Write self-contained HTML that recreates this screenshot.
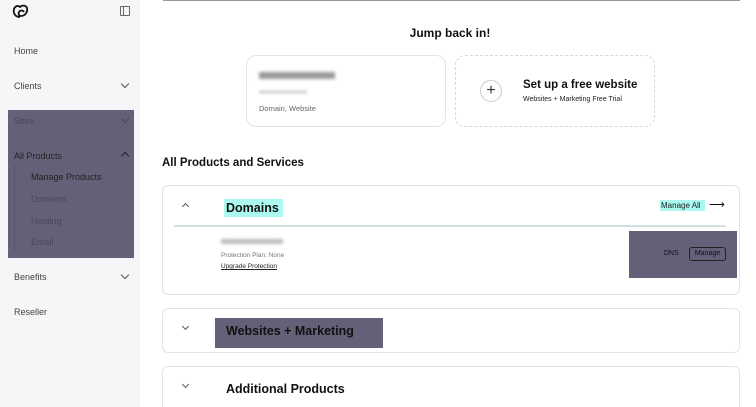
<!DOCTYPE html>
<html style="width:756px;height:407px;overflow:hidden"><head><style>
*{margin:0;padding:0;box-sizing:border-box}
body{width:756px;height:407px;overflow:hidden;background:#fff;font-family:"Liberation Sans",sans-serif;position:relative;color:#111}
.a{position:absolute}
.side{left:0;top:0;width:140px;height:407px;background:#f5f6f8}
.nav{font-size:9px;color:#444;left:14px}
.chev{width:6px;height:6px;border-right:1.2px solid #555;border-bottom:1.2px solid #555;transform:rotate(45deg)}
.up{transform:rotate(-135deg)}
.box{border:1px solid #e2e4e6;border-radius:6px;background:#fff}
</style></head><body>
<div class="a side"></div>
<svg class="a" style="left:12px;top:4px" width="17" height="15" viewBox="0 0 17 15"><path d="M8 13C3 13 1 9 2 5 3 2 6 1 8 3 10 1 14 1 15 4 16 8 13 12 9 12 7 12 6 10 7 8 8 6 11 6 12 8" fill="none" stroke="#111" stroke-width="1.8"/></svg>
<div class="a" style="left:120px;top:6px;width:10px;height:10px;border:1px solid #666;border-radius:1px"></div>
<div class="a" style="left:123px;top:6px;width:1px;height:10px;background:#666"></div>
<div class="a nav" style="top:46px">Home</div>
<div class="a nav" style="top:81px">Clients</div><div class="a chev" style="left:122px;top:81px"></div>
<div class="a" style="left:8px;top:110px;width:126px;height:148px;background:#646078"></div>
<div class="a nav" style="top:116px;color:#4a475a">Sites</div><div class="a chev" style="left:122px;top:116px;border-color:#4a475a"></div>
<div class="a nav" style="top:151px;color:#222">All Products</div><div class="a chev up" style="left:122px;top:153px;border-color:#222"></div>
<div class="a" style="left:14px;top:165px;width:1px;height:86px;background:#57546a"></div>
<div class="a nav" style="left:31px;top:172px;color:#222">Manage Products</div>
<div class="a nav" style="left:31px;top:194px;color:#4a475a">Domains</div>
<div class="a nav" style="left:31px;top:216px;color:#4a475a">Hosting</div>
<div class="a nav" style="left:31px;top:237px;color:#4a475a">Email</div>
<div class="a nav" style="top:272px">Benefits</div><div class="a chev" style="left:122px;top:272px"></div>
<div class="a nav" style="top:307px">Reseller</div>

<div class="a" style="left:163px;top:0;width:577px;height:1px;background:#999"></div>
<div class="a" style="left:160px;top:26px;width:580px;text-align:center;font-size:12px;font-weight:bold">Jump back in!</div>
<div class="a box" style="left:246px;top:55px;width:200px;height:72px;border-radius:10px"></div>
<div class="a" style="left:259px;top:72px;width:76px;height:7px;background:#999;filter:blur(1.5px)"></div>
<div class="a" style="left:259px;top:90px;width:48px;height:4px;background:#ddd;filter:blur(1px)"></div>
<div class="a" style="left:259px;top:104px;font-size:7.5px;color:#666">Domain, Website</div>
<div class="a" style="left:455px;top:55px;width:200px;height:72px;border:1px dashed #d8d8d8;border-radius:10px"></div>
<div class="a" style="left:480px;top:80px;width:22px;height:22px;border:1px solid #ccc;border-radius:50%;text-align:center;font-size:16px;line-height:19px;color:#333">+</div>
<div class="a" style="left:523px;top:79px;font-size:11.5px;font-weight:bold;color:#111">Set up a free website</div>
<div class="a" style="left:523px;top:96px;font-size:7px;color:#222">Websites + Marketing Free Trial</div>

<div class="a" style="left:162px;top:157px;font-size:11.5px;font-weight:bold">All Products and Services</div>

<div class="a box" style="left:162px;top:185px;width:578px;height:110px"></div>
<div class="a chev up" style="left:183px;top:204px;width:5px;height:5px"></div>
<div class="a" style="left:224px;top:199px;width:59px;height:18px;background:#aaf8f0"></div>
<div class="a" style="left:226px;top:201px;font-size:12.5px;font-weight:bold;color:#111">Domains</div>
<div class="a" style="left:660px;top:200px;width:45px;height:11px;background:#aaf8f0"></div>
<div class="a" style="left:661px;top:201px;font-size:8px;color:#222">Manage All</div>
<div class="a" style="left:709px;top:198px;font-size:11px">⟶</div>
<div class="a" style="left:174px;top:225px;width:552px;height:2px;background:#d4dfe2"></div>
<div class="a" style="left:221px;top:239px;width:62px;height:5px;background:#bbb;filter:blur(1.5px)"></div>
<div class="a" style="left:221px;top:252px;font-size:6.5px;color:#777">Protection Plan: None</div>
<div class="a" style="left:221px;top:263px;font-size:6.5px;color:#222;text-decoration:underline">Upgrade Protection</div>
<div class="a" style="left:629px;top:231px;width:108px;height:47px;background:#646078"></div>
<div class="a" style="left:664px;top:250px;font-size:7px;color:#111">DNS</div>
<div class="a" style="left:689px;top:247px;width:37px;height:14px;border:1px solid #222;border-radius:3px;font-size:7px;line-height:12px;text-align:center;color:#111">Manage</div>

<div class="a box" style="left:162px;top:308px;width:578px;height:45px"></div>
<div class="a chev" style="left:183px;top:324px;width:5px;height:5px"></div>
<div class="a" style="left:215px;top:318px;width:168px;height:30px;background:#646078"></div>
<div class="a" style="left:226px;top:324px;font-size:12.5px;font-weight:bold;color:#111">Websites + Marketing</div>

<div class="a box" style="left:162px;top:366px;width:578px;height:41px;border-bottom:none;border-bottom-left-radius:0;border-bottom-right-radius:0"></div>
<div class="a chev" style="left:183px;top:382px;width:5px;height:5px"></div>
<div class="a" style="left:226px;top:382px;font-size:12.5px;font-weight:bold;color:#111">Additional Products</div>
</body></html>
